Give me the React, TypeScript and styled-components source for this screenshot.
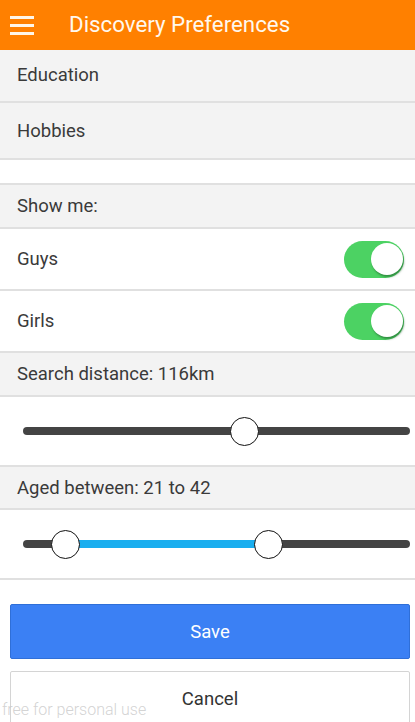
import styled, { createGlobalStyle } from 'styled-components';

const GlobalStyle = createGlobalStyle`
  html, body {
    margin: 0;
    padding: 0;
    background: #ffffff;
  }
  body {
    font-family: Roboto, "Liberation Sans", Arial, sans-serif;
    color: #3a3a3a;
  }
`;

const Screen = styled.div`
  position: relative;
  width: 415px;
  height: 722px;
  overflow: hidden;
  background: #ffffff;
`;

const Header = styled.header`
  display: flex;
  align-items: center;
  height: 50px;
  background: #ff8000;
  color: #fff8ee;
`;

const MenuButton = styled.div`
  display: flex;
  flex-direction: column;
  justify-content: space-between;
  width: 24px;
  height: 19px;
  margin: 0 35px 0 10px;
`;

const MenuLine = styled.span`
  display: block;
  height: 3px;
  background: #fff6e8;
`;

const Title = styled.h1`
  margin: 0 0 2px;
  font-size: 22.3px;
  font-weight: 400;
`;

const Row = styled.div<{ $h: number; $shade?: boolean; $pad?: number }>`
  display: flex;
  align-items: center;
  justify-content: space-between;
  box-sizing: border-box;
  height: ${(p) => p.$h}px;
  padding: 0 11px 0 17px;
  padding-bottom: ${(p) => p.$pad ?? 0}px;
  background: ${(p) => (p.$shade ? '#f3f3f3' : '#ffffff')};
  border-bottom: 2px solid #e0e0e0;
  font-size: 18.5px;
  color: #3a3a3a;
`;

const Toggle = styled.div`
  position: relative;
  width: 60px;
  height: 37px;
  border-radius: 19px;
  background: #4cd263;
`;

const Knob = styled.span`
  position: absolute;
  right: 1px;
  top: 2px;
  width: 32px;
  height: 32px;
  border-radius: 50%;
  background: #ffffff;
  box-shadow: 1px 2px 2px rgba(30, 90, 40, 0.55);
`;

const SliderRow = styled.div`
  box-sizing: border-box;
  height: 70px;
  padding: 0 5px 0 23px;
  display: flex;
  align-items: center;
  border-bottom: 2px solid #e0e0e0;
`;

const Track = styled.div`
  position: relative;
  flex: 1;
  height: 8px;
  border-radius: 4px;
  background: #444444;
`;

const Fill = styled.div`
  position: absolute;
  top: 0;
  height: 8px;
  background: #1aaeef;
`;

const Thumb = styled.span`
  position: absolute;
  top: 50%;
  width: 27px;
  height: 27px;
  margin: -14.5px 0 0 -14.5px;
  border-radius: 50%;
  border: 1px solid #111111;
  background: #ffffff;
`;

const Actions = styled.div`
  display: flex;
  flex-direction: column;
  gap: 12px;
  padding: 24px 5px 0 10px;
`;

const Button = styled.button<{ $primary?: boolean }>`
  height: 55px;
  border-radius: 2px;
  font-family: Roboto, "Liberation Sans", Arial, sans-serif;
  font-size: 18.5px;
  background: ${(p) => (p.$primary ? '#3b80f4' : '#ffffff')};
  color: ${(p) => (p.$primary ? '#ffffff' : '#333333')};
  border: 1px solid ${(p) => (p.$primary ? '#2f6fd8' : '#d4d4d4')};
`;

const Watermark = styled.div`
  position: absolute;
  left: 2px;
  bottom: 3px;
  font-size: 16px;
  font-weight: 300;
  color: rgba(200, 200, 200, 0.8);
`;

export default function App() {
  const dist = 244 - 23;
  const ageLo = 65 - 23;
  const ageHi = 268 - 23;
  return (
    <Screen>
      <GlobalStyle />
      <Header>
        <MenuButton>
          <MenuLine />
          <MenuLine />
          <MenuLine />
        </MenuButton>
        <Title>Discovery Preferences</Title>
      </Header>
      <Row $h={53} $shade $pad={2}>Education</Row>
      <Row $h={57} $shade>Hobbies</Row>
      <Row $h={25} />
      <Row $h={44} $shade>Show me:</Row>
      <Row $h={62}>
        Guys
        <Toggle>
          <Knob />
        </Toggle>
      </Row>
      <Row $h={62}>
        Girls
        <Toggle>
          <Knob />
        </Toggle>
      </Row>
      <Row $h={44} $shade>Search distance: 116km</Row>
      <SliderRow>
        <Track>
          <Thumb style={{ left: dist }} />
        </Track>
      </SliderRow>
      <Row $h={43} $shade>Aged between: 21 to 42</Row>
      <SliderRow>
        <Track>
          <Fill style={{ left: ageLo, width: ageHi - ageLo }} />
          <Thumb style={{ left: ageLo }} />
          <Thumb style={{ left: ageHi }} />
        </Track>
      </SliderRow>
      <Actions>
        <Button $primary>Save</Button>
        <Button>Cancel</Button>
      </Actions>
      <Watermark>free for personal use</Watermark>
    </Screen>
  );
}
